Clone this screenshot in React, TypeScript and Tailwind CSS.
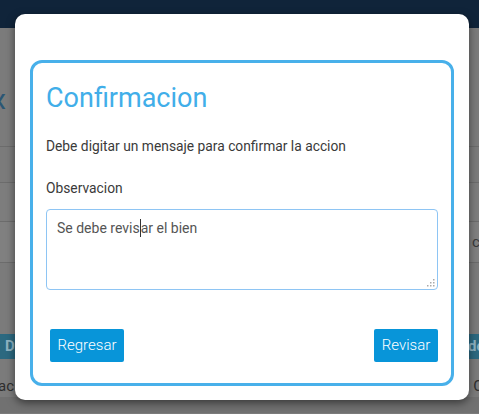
import React from "react";

export default function App() {
  return (
    <div className="relative w-[479px] h-[414px] overflow-hidden bg-[#7b7b7b]" style={{ fontFamily: "Roboto, 'Liberation Sans', sans-serif" }}>
      {/* background page (dimmed) */}
      <div className="h-[28px] bg-[#10243a]" />
      <div className="h-[52px]" />
      <div className="h-[40px] text-[28px] leading-[40px] text-[#2a5674] -ml-[8px]">x</div>
      <div className="h-[27px] border-b border-[#6c6c6c]" />
      <div className="h-[36px] border-b border-[#6c6c6c]" />
      <div className="h-[39px] border-b border-[#6c6c6c] bg-[#7d7d7d]" />
      <div className="h-[41px] border-b border-[#6c6c6c] bg-[#808080] flex justify-end items-center text-[15px] text-[#3a3a3a]">
        <span className="-mr-[6px]">cr</span>
      </div>
      <div className="h-[71px]" />
      <div className="h-[25px] bg-[#2c6980] flex justify-between items-center text-[15px] text-[#8eb3c2] font-bold">
        <span className="ml-[5px]">D</span>
        <span className="-mr-[6px]">do</span>
      </div>
      <div className="h-[17px]" />
      <div className="h-[21px] flex justify-between items-center text-[15px] text-[#2e2e2e]">
        <span className="-ml-[2px]">ac</span>
        <span className="-mr-[4px]">C</span>
      </div>
      <div className="h-[16px] bg-[#717171]" />

      {/* modal */}
      <div className="absolute left-[15px] top-[14px] w-[454px] h-[386px] bg-white rounded-[10px] shadow-[0_3px_8px_rgba(0,0,0,0.5)] pt-[46px] px-[15px] pb-[14px]">
        <div className="h-full border-[3px] border-[#48b0ea] rounded-[12px] px-[13px] pt-[17px]">
          <h1 className="text-[27px] leading-[36px] text-[#41aee9]">Confirmacion</h1>
          <p className="mt-[20px] text-[13.8px] leading-[20px] text-[#3a3a3a]">Debe digitar un mensaje para confirmar la accion</p>
          <p className="mt-[22px] text-[13.8px] leading-[20px] text-[#3a3a3a]">Observacion</p>
          <div className="relative mt-[11px] h-[81px] border border-[#8ec5f4] rounded-[4px] px-[10px] pt-[8px] text-[14px] leading-[20px] text-[#555555]">
            <span>Se debe revis</span>
            <span className="inline-block w-px h-[18px] bg-[#333] align-middle -mt-[2px]" />
            <span>ar el bien</span>
            <svg className="absolute right-[2px] bottom-[2px]" width="8" height="8" viewBox="0 0 8 8">
              <rect x="6" y="0" width="1.5" height="1.5" fill="#aaa" />
              <rect x="3" y="3" width="1.5" height="1.5" fill="#aaa" />
              <rect x="6" y="3" width="1.5" height="1.5" fill="#aaa" />
              <rect x="0" y="6" width="1.5" height="1.5" fill="#aaa" />
              <rect x="3" y="6" width="1.5" height="1.5" fill="#aaa" />
              <rect x="6" y="6" width="1.5" height="1.5" fill="#aaa" />
            </svg>
          </div>
          <div className="mt-[39px] flex justify-between items-center">
            <button className="ml-[4px] h-[33px] w-[74px] bg-[#0895d9] rounded-[2px] text-white text-[15px] font-light">Regresar</button>
            <button className="h-[33px] w-[64px] bg-[#0895d9] rounded-[2px] text-white text-[15px] font-light">Revisar</button>
          </div>
        </div>
      </div>
    </div>
  );
}
